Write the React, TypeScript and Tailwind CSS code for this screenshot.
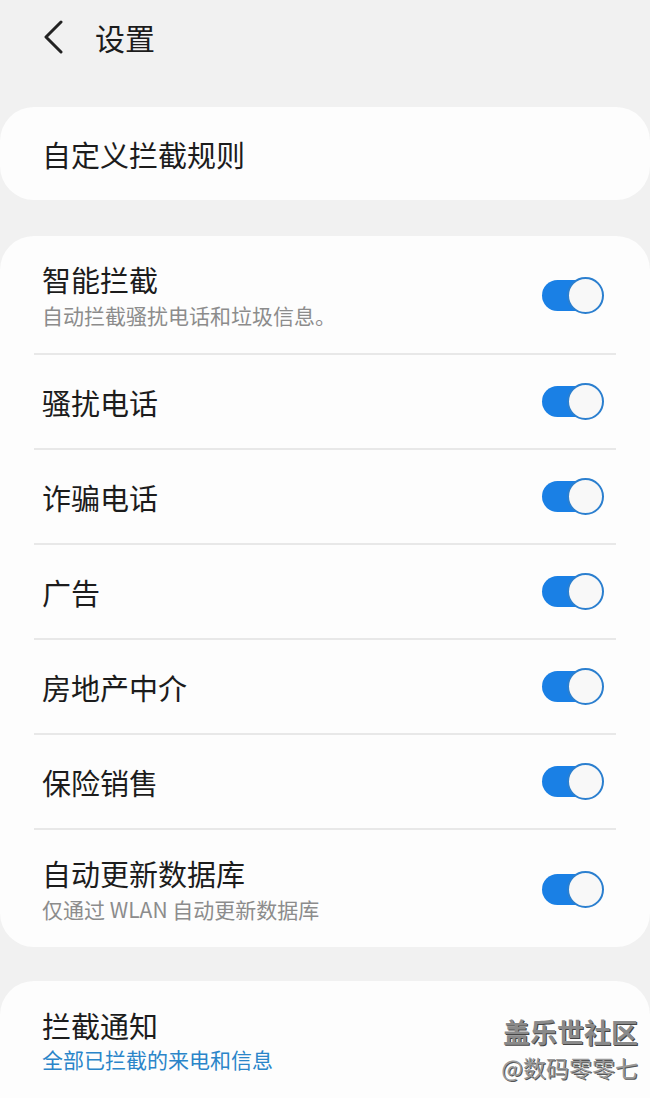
import React from 'react';

interface RuleItem {
  title: string;
  subtitle?: string;
}

const rules: RuleItem[] = [
  { title: '智能拦截', subtitle: '自动拦截骚扰电话和垃圾信息。' },
  { title: '骚扰电话' },
  { title: '诈骗电话' },
  { title: '广告' },
  { title: '房地产中介' },
  { title: '保险销售' },
  { title: '自动更新数据库', subtitle: '仅通过 WLAN 自动更新数据库' },
];

const Toggle = () => (
  <div className="relative w-[62px] h-[37px] shrink-0">
    <div className="absolute left-0 top-[3px] h-[31px] w-[52px] rounded-full bg-[#1a80e5]" />
    <div className="absolute right-0 top-0 h-[37px] w-[37px] rounded-full border-2 border-[#2b7fcf] bg-[#f8f8f8]" />
  </div>
);

const Row = ({ title, subtitle }: RuleItem) =>
  subtitle ? (
    <div className="flex items-center justify-between pl-[42px] pr-[46px] pt-[25px] pb-[23px]">
      <div>
        <div className="text-[29px] leading-[36px] text-[#1c1c1c]">{title}</div>
        <div className="mt-[3px] text-[21px] leading-[30px] text-[#8c8c8c]">{subtitle}</div>
      </div>
      <Toggle />
    </div>
  ) : (
    <div className="flex h-[93px] items-center justify-between pl-[42px] pr-[46px]">
      <div className="text-[29px] leading-[36px] text-[#1c1c1c]">{title}</div>
      <Toggle />
    </div>
  );

export default function App() {
  return (
    <div
      className="relative h-[1098px] w-[650px] overflow-hidden bg-[#f1f1f1]"
      style={{ fontFamily: '"Noto Sans CJK SC", "Noto Sans", sans-serif' }}
    >
      {/* header */}
      <div className="flex h-[74px] items-center">
        <svg width="22" height="34" viewBox="0 0 22 34" className="ml-[43px]">
          <polyline points="18,2 3,17 18,32" fill="none" stroke="#222" strokeWidth="3" strokeLinecap="round" strokeLinejoin="round" />
        </svg>
        <span className="ml-[30px] text-[30px] leading-[36px] text-[#1c1c1c]">设置</span>
      </div>

      <div className="mt-[33px] flex h-[93px] items-center rounded-[34px] bg-[#fdfdfd] px-[42px]">
        <span className="text-[29px] leading-[36px] text-[#1c1c1c]">自定义拦截规则</span>
      </div>

      <div className="mt-[36px] rounded-[34px] bg-[#fdfdfd]">
        {rules.map((r, i) => (
          <React.Fragment key={r.title}>
            {i > 0 && <div className="mx-[34px] h-[2px] bg-[#e8e8e8]" />}
            <Row {...r} />
          </React.Fragment>
        ))}
      </div>

      <div className="mt-[34px] rounded-[34px] bg-[#fdfdfd] pl-[42px] pt-[26px] pb-[60px]">
        <div className="text-[29px] leading-[36px] text-[#1c1c1c]">拦截通知</div>
        <div className="mt-[1px] text-[21px] leading-[30px] text-[#2a85c9]">全部已拦截的来电和信息</div>
      </div>

      {/* watermark */}
      <div className="absolute right-[12px] bottom-[17px] flex flex-col items-end">
        <div className="text-[27px] leading-[34px] font-bold text-[#8a8a8a] [text-shadow:1px_1px_0_#444,-1px_-1px_0_#fff]">
          盖乐世社区
        </div>
        <div className="mt-[4px] text-[23px] leading-[28px] text-[#9a9a9a] [text-shadow:1px_1px_0_#555,-1px_-1px_0_#fff]">
          @数码零零七
        </div>
      </div>
    </div>
  );
}
